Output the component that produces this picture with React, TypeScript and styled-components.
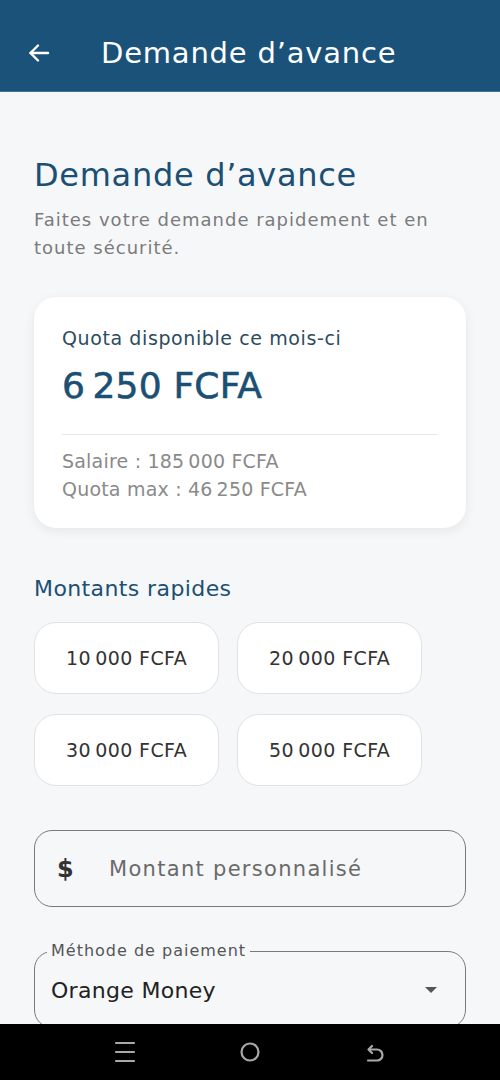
import React from 'react';
import styled, { createGlobalStyle } from 'styled-components';

const FONT = `"DejaVu Sans", "Open Sans", sans-serif`;
const NAVY = '#1b4f74';

const GlobalStyle = createGlobalStyle`
  html, body {
    margin: 0;
    padding: 0;
    background: #f6f7f9;
    font-family: ${FONT};
  }
  * { box-sizing: border-box; }
`;

const Screen = styled.div`
  width: 500px;
  height: 1080px;
  display: flex;
  flex-direction: column;
  overflow: hidden;
  background: #f6f7f9;
`;

const AppBar = styled.header`
  height: 92px;
  flex-shrink: 0;
  background: #1b5279;
  border-bottom: 1px solid #3b7399;
  display: flex;
  align-items: center;
  padding: 14px 0 0 26px;
  gap: 49px;
`;

const BackButton = styled.button`
  border: 0;
  background: none;
  padding: 0;
  width: 26px;
  height: 26px;
  display: flex;
  align-items: center;
  justify-content: center;
`;

const BarTitle = styled.h1`
  margin: 0;
  color: #fff;
  font-weight: 400;
  font-size: 29px;
  letter-spacing: 0.8px;
`;

const Content = styled.main`
  flex: 1;
  overflow: hidden;
  padding: 62px 34px 0;
  display: flex;
  flex-direction: column;

  & > * {
    flex-shrink: 0;
  }
`;

const Title = styled.h2`
  margin: 0;
  color: ${NAVY};
  font-weight: 400;
  font-size: 32px;
  line-height: 42px;
  letter-spacing: 0.7px;
`;

const Subtitle = styled.p`
  margin: 10px 0 0;
  color: #7b7b7b;
  font-size: 18px;
  line-height: 28px;
  letter-spacing: 1px;
`;

const QuotaCard = styled.section`
  margin: 35px 0 0;
  background: #fff;
  border-radius: 22px;
  box-shadow: 0 3px 12px rgba(0, 0, 0, 0.07);
  padding: 29px 28px 25px;
`;

const CardLabel = styled.div`
  color: #2d4b5e;
  font-size: 19px;
  line-height: 24px;
  letter-spacing: 0.6px;
`;

const Amount = styled.div`
  margin-top: 14px;
  color: ${NAVY};
  font-size: 36px;
  line-height: 44px;
  letter-spacing: 0.2px;
  -webkit-text-stroke: 0.6px ${NAVY};
`;

const Divider = styled.hr`
  margin: 26px 0 12px;
  border: 0;
  border-top: 1px solid #e8e8e8;
`;

const Detail = styled.div`
  color: #8a8a8a;
  font-size: 19px;
  line-height: 28px;
  letter-spacing: 0.2px;
`;

const SectionTitle = styled.h3`
  margin: 47px 0 0;
  color: ${NAVY};
  font-weight: 400;
  font-size: 22px;
  line-height: 28px;
  letter-spacing: 0.4px;
`;

const Chips = styled.div`
  margin-top: 19px;
  display: flex;
  flex-wrap: wrap;
  gap: 20px 18px;
  padding-right: 30px;
`;

const Chip = styled.button`
  height: 72px;
  padding: 0 31px;
  background: #fff;
  border: 1px solid #e2e2e2;
  border-radius: 22px;
  font-family: ${FONT};
  font-size: 19px;
  letter-spacing: 0.4px;
  color: #333;
`;

const AmountField = styled.label`
  margin-top: 44px;
  height: 77px;
  border: 1px solid #7a7a7a;
  border-radius: 18px;
  display: flex;
  align-items: center;
  padding: 0 0 0 22px;
  gap: 32px;
`;

const Dollar = styled.span`
  color: #333;
  font-weight: 700;
  font-size: 24px;
  width: 18px;
`;

const AmountInput = styled.input`
  border: 0;
  outline: none;
  background: transparent;
  font-family: ${FONT};
  font-size: 21px;
  letter-spacing: 1.3px;
  color: #333;
  &::placeholder { color: #6a6a6a; }
`;

const SelectBox = styled.fieldset`
  margin: 36px 0 0;
  border: 1px solid #7a7a7a;
  border-radius: 18px;
  padding: 0 28px 0 16px;
`;

const SelectLegend = styled.legend`
  font-size: 16px;
  color: #555;
  padding: 0 4px;
  margin-left: -4px;
  line-height: 16px;
  letter-spacing: 1px;
`;

const SelectRow = styled.div`
  height: 68px;
  padding-bottom: 6px;
  display: flex;
  align-items: center;
  justify-content: space-between;
`;

const SelectValue = styled.span`
  font-size: 22px;
  color: #222;
  letter-spacing: 0.3px;
`;

const Caret = styled.span`
  width: 0;
  height: 0;
  border-left: 6px solid transparent;
  border-right: 6px solid transparent;
  border-top: 6px solid #555;
`;

const NavBar = styled.nav`
  height: 56px;
  flex-shrink: 0;
  background: #000;
  display: flex;
  align-items: center;
  justify-content: center;
  gap: 103px;
`;

const amounts = ['10\u202F000 FCFA', '20\u202F000 FCFA', '30\u202F000 FCFA', '50\u202F000 FCFA'];

export default function App() {
  return (
    <Screen>
      <GlobalStyle />
      <AppBar>
        <BackButton aria-label="Retour">
          <svg width="24" height="24" viewBox="0 0 24 24" fill="none" stroke="#fff" strokeWidth="2.4" strokeLinecap="round" strokeLinejoin="round">
            <path d="M21 12H3.5" />
            <path d="M11 4.5 3.5 12l7.5 7.5" />
          </svg>
        </BackButton>
        <BarTitle>Demande d’avance</BarTitle>
      </AppBar>

      <Content>
        <Title>Demande d’avance</Title>
        <Subtitle>Faites votre demande rapidement et en toute sécurité.</Subtitle>

        <QuotaCard>
          <CardLabel>Quota disponible ce mois-ci</CardLabel>
          <Amount>6{'\u202F'}250 FCFA</Amount>
          <Divider />
          <Detail>Salaire : 185{'\u202F'}000 FCFA</Detail>
          <Detail>Quota max : 46{'\u202F'}250 FCFA</Detail>
        </QuotaCard>

        <SectionTitle>Montants rapides</SectionTitle>
        <Chips>
          {amounts.map((a) => (
            <Chip key={a}>{a}</Chip>
          ))}
        </Chips>

        <AmountField>
          <Dollar>$</Dollar>
          <AmountInput placeholder="Montant personnalisé" />
        </AmountField>

        <SelectBox>
          <SelectLegend>Méthode de paiement</SelectLegend>
          <SelectRow>
            <SelectValue>Orange Money</SelectValue>
            <Caret />
          </SelectRow>
        </SelectBox>
      </Content>

      <NavBar>
        <svg width="22" height="22" viewBox="0 0 22 22" stroke="#a9a9a9" strokeWidth="2.2" strokeLinecap="round">
          <path d="M2 2h18M2 11h18M2 20h18" />
        </svg>
        <svg width="22" height="22" viewBox="0 0 22 22" fill="none" stroke="#a9a9a9" strokeWidth="2.2">
          <circle cx="11" cy="11" r="8.5" />
        </svg>
        <svg width="22" height="22" viewBox="0 0 22 22" fill="none" stroke="#a9a9a9" strokeWidth="2.2" strokeLinecap="round" strokeLinejoin="round">
          <path d="M4 19.5h9a5.5 5.5 0 0 0 0-11H5" />
          <path d="M8 5 4.5 8.5 8 12" />
        </svg>
      </NavBar>
    </Screen>
  );
}
